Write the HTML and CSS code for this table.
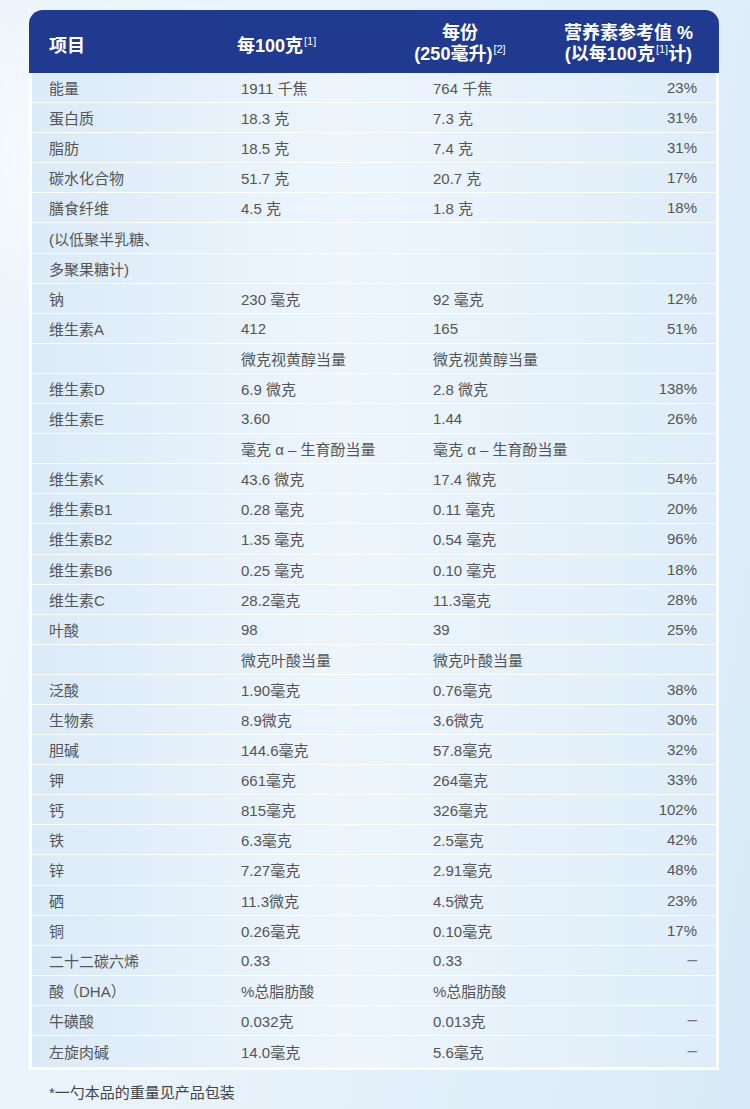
FILE: index.html
```html
<!DOCTYPE html>
<html lang="zh-CN">
<head>
<meta charset="utf-8">
<title>营养成分表</title>
<link rel="stylesheet" href="styles.css">
</head>
<body>
<div class="page">
  <div class="deco"></div>
  <div class="table">
    <div class="thead">
      <div class="th th1">项目</div>
      <div class="th th2">每100克<sup>[1]</sup></div>
      <div class="th th3">每份<br>(250毫升)<sup>[2]</sup></div>
      <div class="th th4">营养素参考值 %<br>(以每100克<sup>[1]</sup>计)</div>
    </div>
    <div class="tbody">
      <div class="row"><span>能量</span><span>1911 千焦</span><span>764 千焦</span><span class="pct">23%</span></div>
      <div class="row"><span>蛋白质</span><span>18.3 克</span><span>7.3 克</span><span class="pct">31%</span></div>
      <div class="row"><span>脂肪</span><span>18.5 克</span><span>7.4 克</span><span class="pct">31%</span></div>
      <div class="row"><span>碳水化合物</span><span>51.7 克</span><span>20.7 克</span><span class="pct">17%</span></div>
      <div class="row"><span>膳食纤维</span><span>4.5 克</span><span>1.8 克</span><span class="pct">18%</span></div>
      <div class="row"><span>(以低聚半乳糖、</span><span></span><span></span><span class="pct"></span></div>
      <div class="row"><span>多聚果糖计)</span><span></span><span></span><span class="pct"></span></div>
      <div class="row"><span>钠</span><span>230 毫克</span><span>92 毫克</span><span class="pct">12%</span></div>
      <div class="row"><span>维生素A</span><span>412</span><span>165</span><span class="pct">51%</span></div>
      <div class="row"><span></span><span>微克视黄醇当量</span><span>微克视黄醇当量</span><span class="pct"></span></div>
      <div class="row"><span>维生素D</span><span>6.9 微克</span><span>2.8 微克</span><span class="pct">138%</span></div>
      <div class="row"><span>维生素E</span><span>3.60</span><span>1.44</span><span class="pct">26%</span></div>
      <div class="row"><span></span><span>毫克 α – 生育酚当量</span><span>毫克 α – 生育酚当量</span><span class="pct"></span></div>
      <div class="row"><span>维生素K</span><span>43.6 微克</span><span>17.4 微克</span><span class="pct">54%</span></div>
      <div class="row"><span>维生素B1</span><span>0.28 毫克</span><span>0.11 毫克</span><span class="pct">20%</span></div>
      <div class="row"><span>维生素B2</span><span>1.35 毫克</span><span>0.54 毫克</span><span class="pct">96%</span></div>
      <div class="row"><span>维生素B6</span><span>0.25 毫克</span><span>0.10 毫克</span><span class="pct">18%</span></div>
      <div class="row"><span>维生素C</span><span>28.2毫克</span><span>11.3毫克</span><span class="pct">28%</span></div>
      <div class="row"><span>叶酸</span><span>98</span><span>39</span><span class="pct">25%</span></div>
      <div class="row"><span></span><span>微克叶酸当量</span><span>微克叶酸当量</span><span class="pct"></span></div>
      <div class="row"><span>泛酸</span><span>1.90毫克</span><span>0.76毫克</span><span class="pct">38%</span></div>
      <div class="row"><span>生物素</span><span>8.9微克</span><span>3.6微克</span><span class="pct">30%</span></div>
      <div class="row"><span>胆碱</span><span>144.6毫克</span><span>57.8毫克</span><span class="pct">32%</span></div>
      <div class="row"><span>钾</span><span>661毫克</span><span>264毫克</span><span class="pct">33%</span></div>
      <div class="row"><span>钙</span><span>815毫克</span><span>326毫克</span><span class="pct">102%</span></div>
      <div class="row"><span>铁</span><span>6.3毫克</span><span>2.5毫克</span><span class="pct">42%</span></div>
      <div class="row"><span>锌</span><span>7.27毫克</span><span>2.91毫克</span><span class="pct">48%</span></div>
      <div class="row"><span>硒</span><span>11.3微克</span><span>4.5微克</span><span class="pct">23%</span></div>
      <div class="row"><span>铜</span><span>0.26毫克</span><span>0.10毫克</span><span class="pct">17%</span></div>
      <div class="row"><span>二十二碳六烯</span><span>0.33</span><span>0.33</span><span class="pct dash">–</span></div>
      <div class="row"><span>酸（DHA）</span><span>%总脂肪酸</span><span>%总脂肪酸</span><span class="pct"></span></div>
      <div class="row"><span>牛磺酸</span><span>0.032克</span><span>0.013克</span><span class="pct dash">–</span></div>
      <div class="row last"><span>左旋肉碱</span><span>14.0毫克</span><span>5.6毫克</span><span class="pct dash">–</span></div>
    </div>
  </div>
  <p class="note">*一勺本品的重量见产品包装</p>
</div>
</body>
</html>
```

FILE: styles.css
```css
html, body {
  margin: 0;
  padding: 0;
}
body {
  width: 750px;
  height: 1109px;
  overflow: hidden;
  font-family: "Liberation Sans", "Noto Sans CJK SC", sans-serif;
  background: linear-gradient(100deg, #edf5fc 0%, #e7f2fb 45%, #d9ebf8 100%);
}
.page {
  position: relative;
  padding-top: 10px;
  height: 1099px;
}
.deco {
  position: absolute;
  left: 0;
  top: 0;
  width: 420px;
  height: 320px;
  pointer-events: none;
  background:
    radial-gradient(ellipse 220px 60px at 150px 40px, rgba(255,255,255,0.55), rgba(255,255,255,0) 70%),
    radial-gradient(ellipse 90px 260px at 20px 160px, rgba(255,255,255,0.5), rgba(255,255,255,0) 70%),
    radial-gradient(ellipse 180px 40px at 300px 70px, rgba(255,255,255,0.35), rgba(255,255,255,0) 70%);
}
.table {
  position: relative;
  margin-left: 29px;
  width: 690px;
}
.thead {
  display: grid;
  grid-template-columns: 188px 163px 120px 1fr;
  align-items: center;
  height: 63px;
  padding-left: 20px;
  padding-right: 26px;
  background: #1f3a8e;
  border-radius: 14px 14px 0 0;
  color: #fff;
  font-weight: 700;
  font-size: 18px;
  line-height: 21px;
}
.th1, .th2 {
  padding-top: 9px;
}
.th3 {
  text-align: center;
  padding-top: 4px;
}
.th4 {
  justify-self: end;
  text-align: center;
  padding-top: 4px;
}
sup {
  font-size: 11px;
  font-weight: 400;
  line-height: 0;
  vertical-align: 7px;
  margin-left: 1px;
}
.tbody {
  border: 3px solid #fff;
  border-top: 0;
  background: linear-gradient(90deg, rgba(216,233,247,0.85) 0%, rgba(238,246,252,0.9) 45%, rgba(222,237,249,0.9) 100%);
  padding-bottom: 1px;
}
.row {
  display: grid;
  grid-template-columns: 192px 192px 1fr auto;
  align-items: center;
  height: 30.1px;
  box-sizing: border-box;
  padding-left: 17px;
  padding-right: 19px;
  border-bottom: 1px solid rgba(255,255,255,0.95);
  font-size: 15px;
  color: #555;
  white-space: nowrap;
}
.row.last {
  border-bottom: 0;
}
.pct {
  text-align: right;
}
.dash {
  color: #777;
  font-size: 17px;
}
.note {
  margin: 14px 0 0 49px;
  font-size: 15px;
  color: #444;
  line-height: 18px;
}
```
